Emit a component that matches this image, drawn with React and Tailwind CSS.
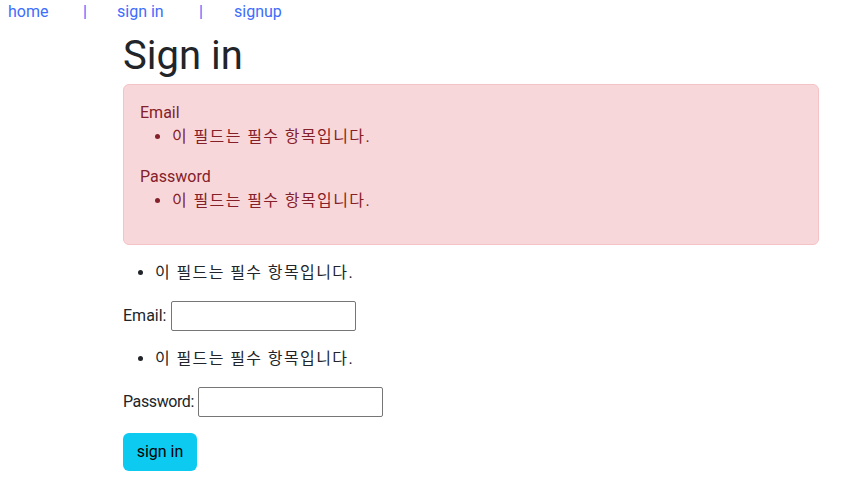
const msg = '이 필드는 필수 항목입니다.';

function Msg() {
  return <span className="tracking-[1.4px]">{msg}</span>;
}

export default function App() {
  return (
    <div className="min-h-[485px] bg-white text-[16px] leading-6 text-[#212529]" style={{ fontFamily: 'Roboto, "Noto Sans CJK KR", sans-serif' }}>
      <nav className="flex pl-2 text-[#3d6dfd]">
        <a href="#" className="w-[75px]">home</a>
        <span className="w-[34px]">|</span>
        <a href="#" className="w-[82px]">sign in</a>
        <span className="w-[35px]">|</span>
        <a href="#">signup</a>
      </nav>

      <main className="ml-[123px] w-[696px]">
        <h1 className="mt-2 mb-1 text-[40px] leading-[48px] font-normal">Sign in</h1>

        <div className="mb-4 rounded-md border border-[#f5c2c7] bg-[#f8d7da] px-4 pt-4 pb-[15px] text-[#842029]">
          <div>Email</div>
          <ul className="mb-4 list-disc pl-8">
            <li><Msg /></li>
          </ul>
          <div>Password</div>
          <ul className="mb-4 list-disc pl-8">
            <li><Msg /></li>
          </ul>
        </div>

        <form>
          <ul className="mb-4 list-disc pl-8">
            <li><Msg /></li>
          </ul>
          <p className="mb-4 flex items-center">
            <label htmlFor="email">Email:</label>
            <input id="email" type="text" className="ml-[5px] h-[30px] w-[185px] rounded-[2px] border border-[#767676] px-1" />
          </p>
          <ul className="mb-4 list-disc pl-8">
            <li><Msg /></li>
          </ul>
          <p className="mb-4 flex items-center">
            <label htmlFor="password" className="tracking-[-0.4px]">Password:</label>
            <input id="password" type="password" className="ml-[4px] h-[30px] w-[185px] rounded-[2px] border border-[#767676] px-1" />
          </p>
          <button type="button" className="h-[38px] w-[74px] rounded-md bg-[#0dcaf0] text-black">
            sign in
          </button>
        </form>
      </main>
    </div>
  );
}
